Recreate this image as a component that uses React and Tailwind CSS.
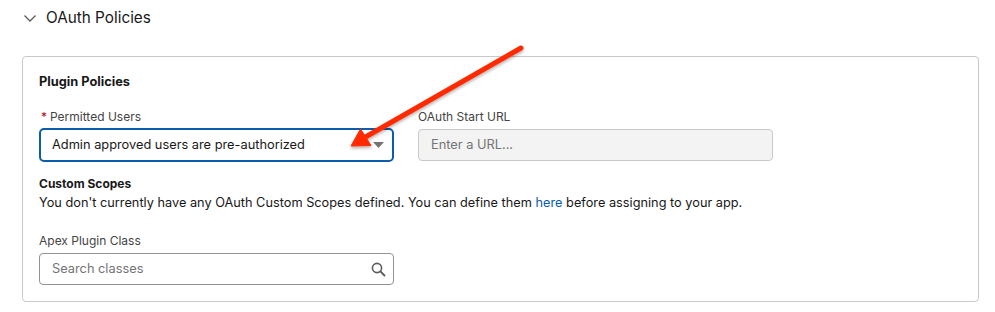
import React from "react";

export default function App() {
  return (
    <div
      className="relative w-[995px] h-[312px] bg-white overflow-hidden text-[#181818]"
      style={{ fontFamily: "Inter, 'Noto Sans', sans-serif" }}
    >
      {/* Header */}
      <div className="flex items-center h-[22px] mt-[7px] pl-[23px]">
        <svg width="14" height="14" viewBox="0 0 14 14" className="mr-[9px]">
          <path d="M1.5 4.5 L7 10 L12.5 4.5" fill="none" stroke="#5c5c5c" strokeWidth="1.3" />
        </svg>
        <span className="text-[15.3px] leading-[22px] text-[#181818]">OAuth Policies</span>
      </div>

      {/* Card */}
      <div className="absolute left-[22px] top-[56px] w-[957px] h-[246px] border border-[#c9c9c9] rounded-[4px] pl-[16px] pt-[16px]">
        <div className="text-[12.8px] leading-[18px] font-bold text-[#181818]">Plugin Policies</div>

        <div className="flex gap-[24px] mt-[17px]">
          <div className="w-[355px]">
            <div className="text-[12px] leading-[18px] text-[#444444] flex items-center pl-[2px]">
              <span className="text-[#ba0517] mr-[3px]">*</span>Permitted Users
            </div>
            <div className="mt-[2px] h-[34px] border-2 border-[#0b5cab] rounded-[5px] flex items-center justify-between pl-[11px] pr-[8px]">
              <span className="text-[12.8px] text-[#181818]">Admin approved users are pre-authorized</span>
              <svg width="11" height="6" viewBox="0 0 11 6">
                <path d="M0 0 L11 0 L5.5 6 Z" fill="#747474" />
              </svg>
            </div>
          </div>
          <div className="w-[355px]">
            <div className="text-[12px] leading-[18px] text-[#444444]">OAuth Start URL</div>
            <div className="mt-[3px] h-[32px] border border-[#c9c9c9] bg-[#f3f3f3] rounded-[4px] flex items-center pl-[12px]">
              <span className="text-[12.8px] text-[#747474]">Enter a URL...</span>
            </div>
          </div>
        </div>

        <div className="mt-[13px] text-[12px] leading-[18px] font-bold text-[#181818]">Custom Scopes</div>
        <div className="mt-[1px] text-[12.75px] leading-[18px] text-[#181818]">
          You don't currently have any OAuth Custom Scopes defined. You can define them{" "}
          <span className="text-[#0b5cab]">here</span> before assigning to your app.
        </div>

        <div className="mt-[20px] text-[12px] leading-[18px] text-[#444444]">Apex Plugin Class</div>
        <div className="mt-[3px] w-[355px] h-[32px] border border-[#939393] rounded-[4px] flex items-center justify-between pl-[12px] pr-[7px]">
          <span className="text-[12.8px] text-[#747474]">Search classes</span>
          <svg width="15" height="15" viewBox="0 0 15 15">
            <circle cx="6" cy="6" r="4.6" fill="none" stroke="#5c5c5c" strokeWidth="1.6" />
            <path d="M9.4 9.4 L13.5 13.5" stroke="#5c5c5c" strokeWidth="1.8" strokeLinecap="round" />
          </svg>
        </div>
      </div>

      {/* Red annotation arrow */}
      <svg className="absolute left-0 top-0 pointer-events-none" width="995" height="312">
        <defs>
          <filter id="sh" x="-20%" y="-20%" width="140%" height="140%">
            <feDropShadow dx="0" dy="2" stdDeviation="1.5" floodColor="#000" floodOpacity="0.3" />
          </filter>
        </defs>
        <g filter="url(#sh)">
          <line x1="521" y1="48" x2="362" y2="139" stroke="#ff2a00" strokeWidth="5" strokeLinecap="round" />
          <path d="M351 146 L360.5 129 L371 145.5 Z" fill="#ff2a00" stroke="#ff2a00" strokeWidth="1" strokeLinejoin="round" />
        </g>
      </svg>
    </div>
  );
}
